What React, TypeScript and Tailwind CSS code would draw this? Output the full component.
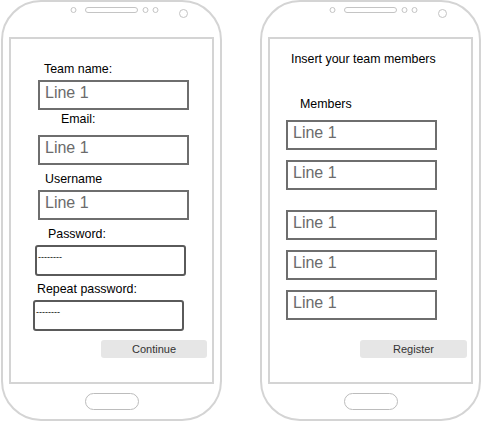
import React from "react";

const Deco = () => (
  <svg width="217" height="35" className="block" fill="none" stroke="#c4c4c4" strokeWidth="1">
    <circle cx="70.5" cy="8" r="2.5" />
    <rect x="82.5" y="5.5" width="52" height="5" rx="2.5" />
    <circle cx="142.5" cy="8" r="2.5" />
    <circle cx="152.5" cy="8" r="2.5" />
    <circle cx="180.5" cy="11.5" r="4" />
  </svg>
);

function Phone({ children, className = "" }: { children: React.ReactNode; className?: string }) {
  return (
    <div
      className={`flex flex-col shrink-0 w-[221px] h-[421px] border-2 border-[#d4d4d4] rounded-[40px] bg-white ${className}`}
    >
      <div className="h-[35px] shrink-0">
        <Deco />
      </div>
      <div className="mx-[6px] h-[347px] shrink-0 border-2 border-[#d4d4d4] flex flex-col items-start">
        {children}
      </div>
      <div className="flex-1 flex items-center justify-center">
        <div className="w-[54px] h-[17px] rounded-full border border-[#bcbcbc]" />
      </div>
    </div>
  );
}

const fieldCls =
  "w-[151px] h-[30px] border-2 border-[#6e6e6e] pl-[5px] pt-[2px] text-[16px] leading-[18px] text-[#6b6b6b]";
const labelCls = "text-[12.4px] leading-[14px] text-black";
const passCls =
  "w-[151px] h-[31px] border-2 border-[#5a5a5a] rounded-[3px] pl-[1px] pt-[6px] text-[9px] leading-[9px] text-black";

export default function App() {
  return (
    <div className="w-[481px] h-[421px] bg-white flex flex-row font-['Liberation_Sans',Arial,sans-serif]">
      <Phone className="ml-[1px]">
        <div className={`${labelCls} mt-[23px] ml-[33px]`}>Team name:</div>
        <div className={`${fieldCls} mt-[4px] ml-[27px]`}>Line 1</div>
        <div className={`${labelCls} mt-[2px] ml-[50px]`}>Email:</div>
        <div className={`${fieldCls} mt-[9px] ml-[27px]`}>Line 1</div>
        <div className={`${labelCls} mt-[7px] ml-[34px]`}>Username</div>
        <div className={`${fieldCls} mt-[4px] ml-[27px]`}>Line 1</div>
        <div className={`${labelCls} mt-[7px] ml-[37px]`}>Password:</div>
        <div className={`${passCls} mt-[4px] ml-[24px]`}>--------</div>
        <div className={`${labelCls} mt-[6px] ml-[26px]`}>Repeat password:</div>
        <div className={`${passCls} mt-[4px] ml-[22px]`}>--------</div>
        <div className="mt-[9px] ml-[90px] w-[106px] h-[18px] bg-[#e6e6e6] rounded-[3px] flex items-center justify-center text-[11px] leading-[13px] text-[#333333]">
          Continue
        </div>
      </Phone>
      <Phone className="ml-[38px]">
        <div className={`${labelCls} mt-[13px] ml-[21px]`}>Insert your team members</div>
        <div className={`${labelCls} mt-[31px] ml-[30px]`}>Members</div>
        <div className={`${fieldCls} mt-[9px] ml-[16px]`}>Line 1</div>
        <div className={`${fieldCls} mt-[10px] ml-[16px]`}>Line 1</div>
        <div className={`${fieldCls} mt-[20px] ml-[16px]`}>Line 1</div>
        <div className={`${fieldCls} mt-[10px] ml-[16px]`}>Line 1</div>
        <div className={`${fieldCls} mt-[10px] ml-[16px]`}>Line 1</div>
        <div className="mt-[20px] ml-[90px] w-[107px] h-[18px] bg-[#e6e6e6] rounded-[3px] flex items-center justify-center text-[11px] leading-[13px] text-[#333333]">
          Register
        </div>
      </Phone>
    </div>
  );
}
